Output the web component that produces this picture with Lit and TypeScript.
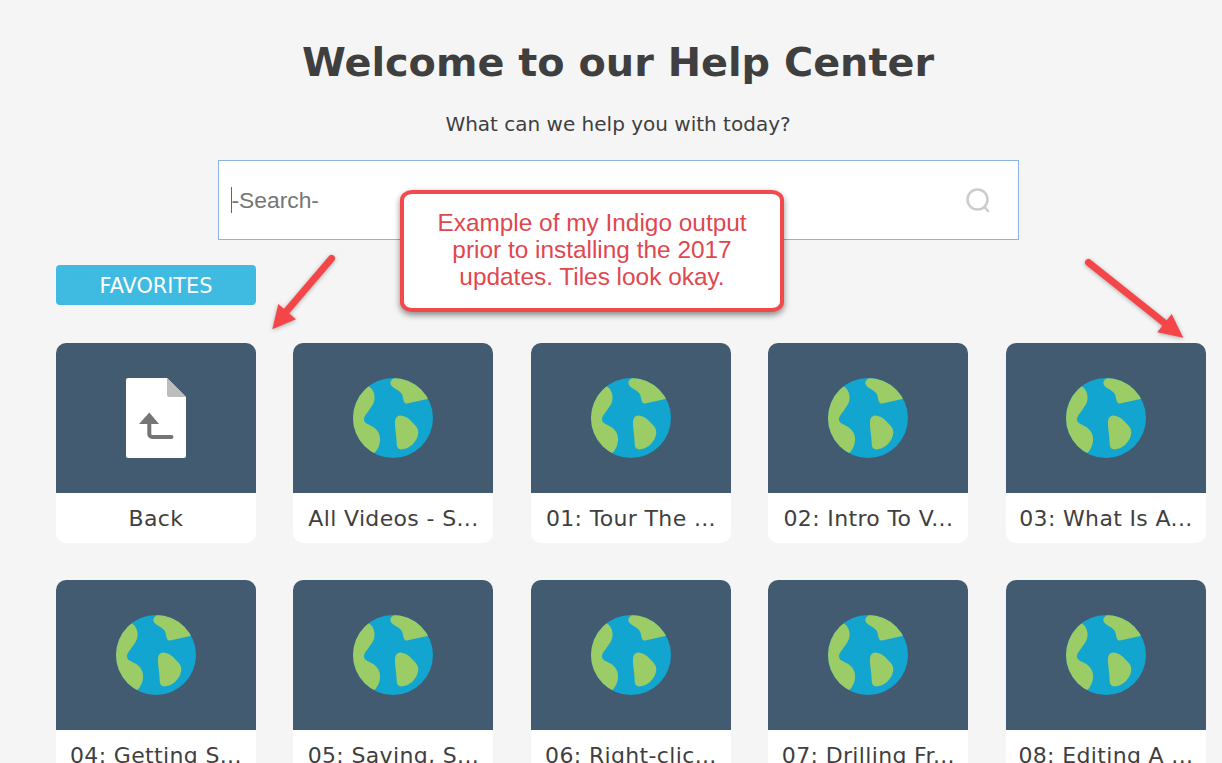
import { LitElement, html, css, svg } from "lit";
import { customElement } from "lit/decorators.js";

const globe = html`<svg class="icon" viewBox="0 0 80 80" width="80" height="80" aria-hidden="true">
  <defs><clipPath id="g"><circle cx="40" cy="40" r="40"></circle></clipPath></defs>
  <circle cx="40" cy="40" r="40" fill="#12a5d0"></circle>
  <g clip-path="url(#g)" fill="#9ccc65">
    <path d="M16 8.500C20 11 22 16 21.500 21C21 26 18 29 15.500 33C13 36.500 10.500 39 11 42C11.500 46 17 46.500 21 49.500C25.500 53 27.500 57 27 63C26.600 67 25 71 22 74.500L0 82L-3 0Z"></path>
    <path d="M37.500 3.700C38.500 1.500 40 .5 42 0L82 0L75.500 20.800L54 25.500C51.500 26 50.500 23 50 20C49.500 15.500 47 13.500 43.500 11.500C40.500 9.800 36.500 7.500 37.500 3.700Z"></path>
    <path d="M42 43C42.500 39.500 44.500 37.300 47.500 37.500C52 37.800 56 40.500 59 44C63 48 65.500 50.500 65.300 54.500C65 60 61.500 65 58 67.800C54.500 70.500 50 71.800 47 71.300C44.500 70.800 43.700 68.500 43.700 65.500C43.700 58 41.500 50 42 43Z"></path>
  </g>
</svg>`;

const back = html`<svg class="icon" viewBox="0 0 60 80" width="60" height="80" aria-hidden="true">
  <path d="M2 0H41L60 19V78a2 2 0 0 1-2 2H2a2 2 0 0 1-2-2V2a2 2 0 0 1 2-2Z" fill="#fff"></path>
  <path d="M41 0L60 19H43a2 2 0 0 1-2-2Z" fill="#bdbdbd"></path>
  <path d="M23.300 34.500L13 46H33Z" fill="#757575"></path>
  <path d="M23.300 44V56a3 3 0 0 0 3 3H45.500" fill="none" stroke="#757575" stroke-width="4" stroke-linecap="round"></path>
</svg>`;

const titles = [
  "All Videos - S...",
  "01: Tour The ...",
  "02: Intro To V...",
  "03: What Is A...",
  "04: Getting S...",
  "05: Saving, S...",
  "06: Right-clic...",
  "07: Drilling Fr...",
  "08: Editing A ...",
];

@customElement("app-root")
export class AppRoot extends LitElement {
  static styles = css`
    :host {
      display: block;
      position: relative;
      height: 763px;
      overflow: hidden;
      background: #f5f5f6;
      font-family: "DejaVu Sans", sans-serif;
      color: #3f3f3f;
    }
    .page { padding-top: 38px; }
    h1 {
      margin: 0;
      padding-left: 14px;
      font-size: 39.8px;
      line-height: 48px;
      font-weight: 700;
      text-align: center;
    }
    .sub {
      margin: 24px 0 0;
      padding-left: 14px;
      font-size: 20px;
      line-height: 28px;
      text-align: center;
    }
    .search {
      box-sizing: border-box;
      display: flex;
      align-items: center;
      justify-content: space-between;
      width: 801px;
      height: 80px;
      margin: 22px 0 0 217.5px;
      padding: 0 27px 0 12px;
      background: #fff;
      border: 1px solid #8db3e5;
    }
    .placeholder {
      border-left: 1px solid #666;
      font-family: "Liberation Sans", sans-serif;
      font-size: 22.8px;
      line-height: 26px;
      color: #757575;
    }
    .fav {
      width: 200px;
      height: 40px;
      margin: 25px 0 0 56px;
      border-radius: 4px;
      background: #3fbbe2;
      color: #fff;
      font-size: 20.8px;
      line-height: 42px;
      text-align: center;
    }
    .grid {
      display: grid;
      grid-template-columns: repeat(5, 200px);
      column-gap: 37.5px;
      row-gap: 37px;
      margin: 38px 0 0 55.9px;
    }
    .tile {
      height: 200px;
      border-radius: 10px;
      background: #fff;
      overflow: hidden;
    }
    .thumb {
      display: flex;
      align-items: center;
      justify-content: center;
      height: 150px;
      background: #425b71;
    }
    .icon { display: block; }
    .label {
      font-size: 22px;
      letter-spacing: 0.35px;
      line-height: 52px;
      text-align: center;
      white-space: nowrap;
    }
    .callout {
      box-sizing: border-box;
      position: absolute;
      left: 400px;
      top: 190px;
      width: 384px;
      height: 122px;
      padding-top: 14.5px;
      background: #fff;
      border: 4px solid #f24a4c;
      border-radius: 12px / 10px;
      box-shadow: 0 3px 6px rgba(0, 0, 0, 0.45);
      font-family: "Liberation Sans", sans-serif;
      font-size: 24.4px;
      line-height: 27px;
      color: #e0474f;
      text-align: center;
    }
    .arrows {
      position: absolute;
      left: 0;
      top: 0;
      pointer-events: none;
      filter: drop-shadow(0 1px 2px rgba(0, 0, 0, 0.3));
    }
  `;

  private tile(name: string, icon: unknown) {
    return html`<div class="tile">
      <div class="thumb">${icon}</div>
      <div class="label">${name}</div>
    </div>`;
  }

  render() {
    return html`
      <div class="page">
        <h1>Welcome to our Help Center</h1>
        <p class="sub">What can we help you with today?</p>
        <div class="search">
          <span class="placeholder">-Search-</span>
          <svg viewBox="0 0 26 26" width="26" height="26" aria-hidden="true">
            <circle cx="12.500" cy="12.500" r="10" fill="none" stroke="#ccc" stroke-width="2.500"></circle>
            <path d="M19.500 20L23 24" fill="none" stroke="#ccc" stroke-width="2.500" stroke-linecap="round"></path>
          </svg>
        </div>
        <div class="fav">FAVORITES</div>
        <div class="grid">
          ${this.tile("Back", back)}
          ${titles.map((t) => this.tile(t, globe))}
        </div>
      </div>
      <svg class="arrows" width="1222" height="763" aria-hidden="true">
        ${svg`
          <path d="M331.500 258.500L285 313" stroke="#f44649" stroke-width="7" stroke-linecap="round" fill="none"></path>
          <path d="M272.300 329.300L278.300 304L296 319.300Z" fill="#f44649"></path>
          <path d="M1088.500 262.500L1167 325" stroke="#f44649" stroke-width="7" stroke-linecap="round" fill="none"></path>
          <path d="M1183.300 337.700L1171.700 314L1157.300 332.300Z" fill="#f44649"></path>
        `}
      </svg>
      <div class="callout">Example of my Indigo output<br />prior to installing the 2017<br />updates. Tiles look okay.</div>
    `;
  }
}
